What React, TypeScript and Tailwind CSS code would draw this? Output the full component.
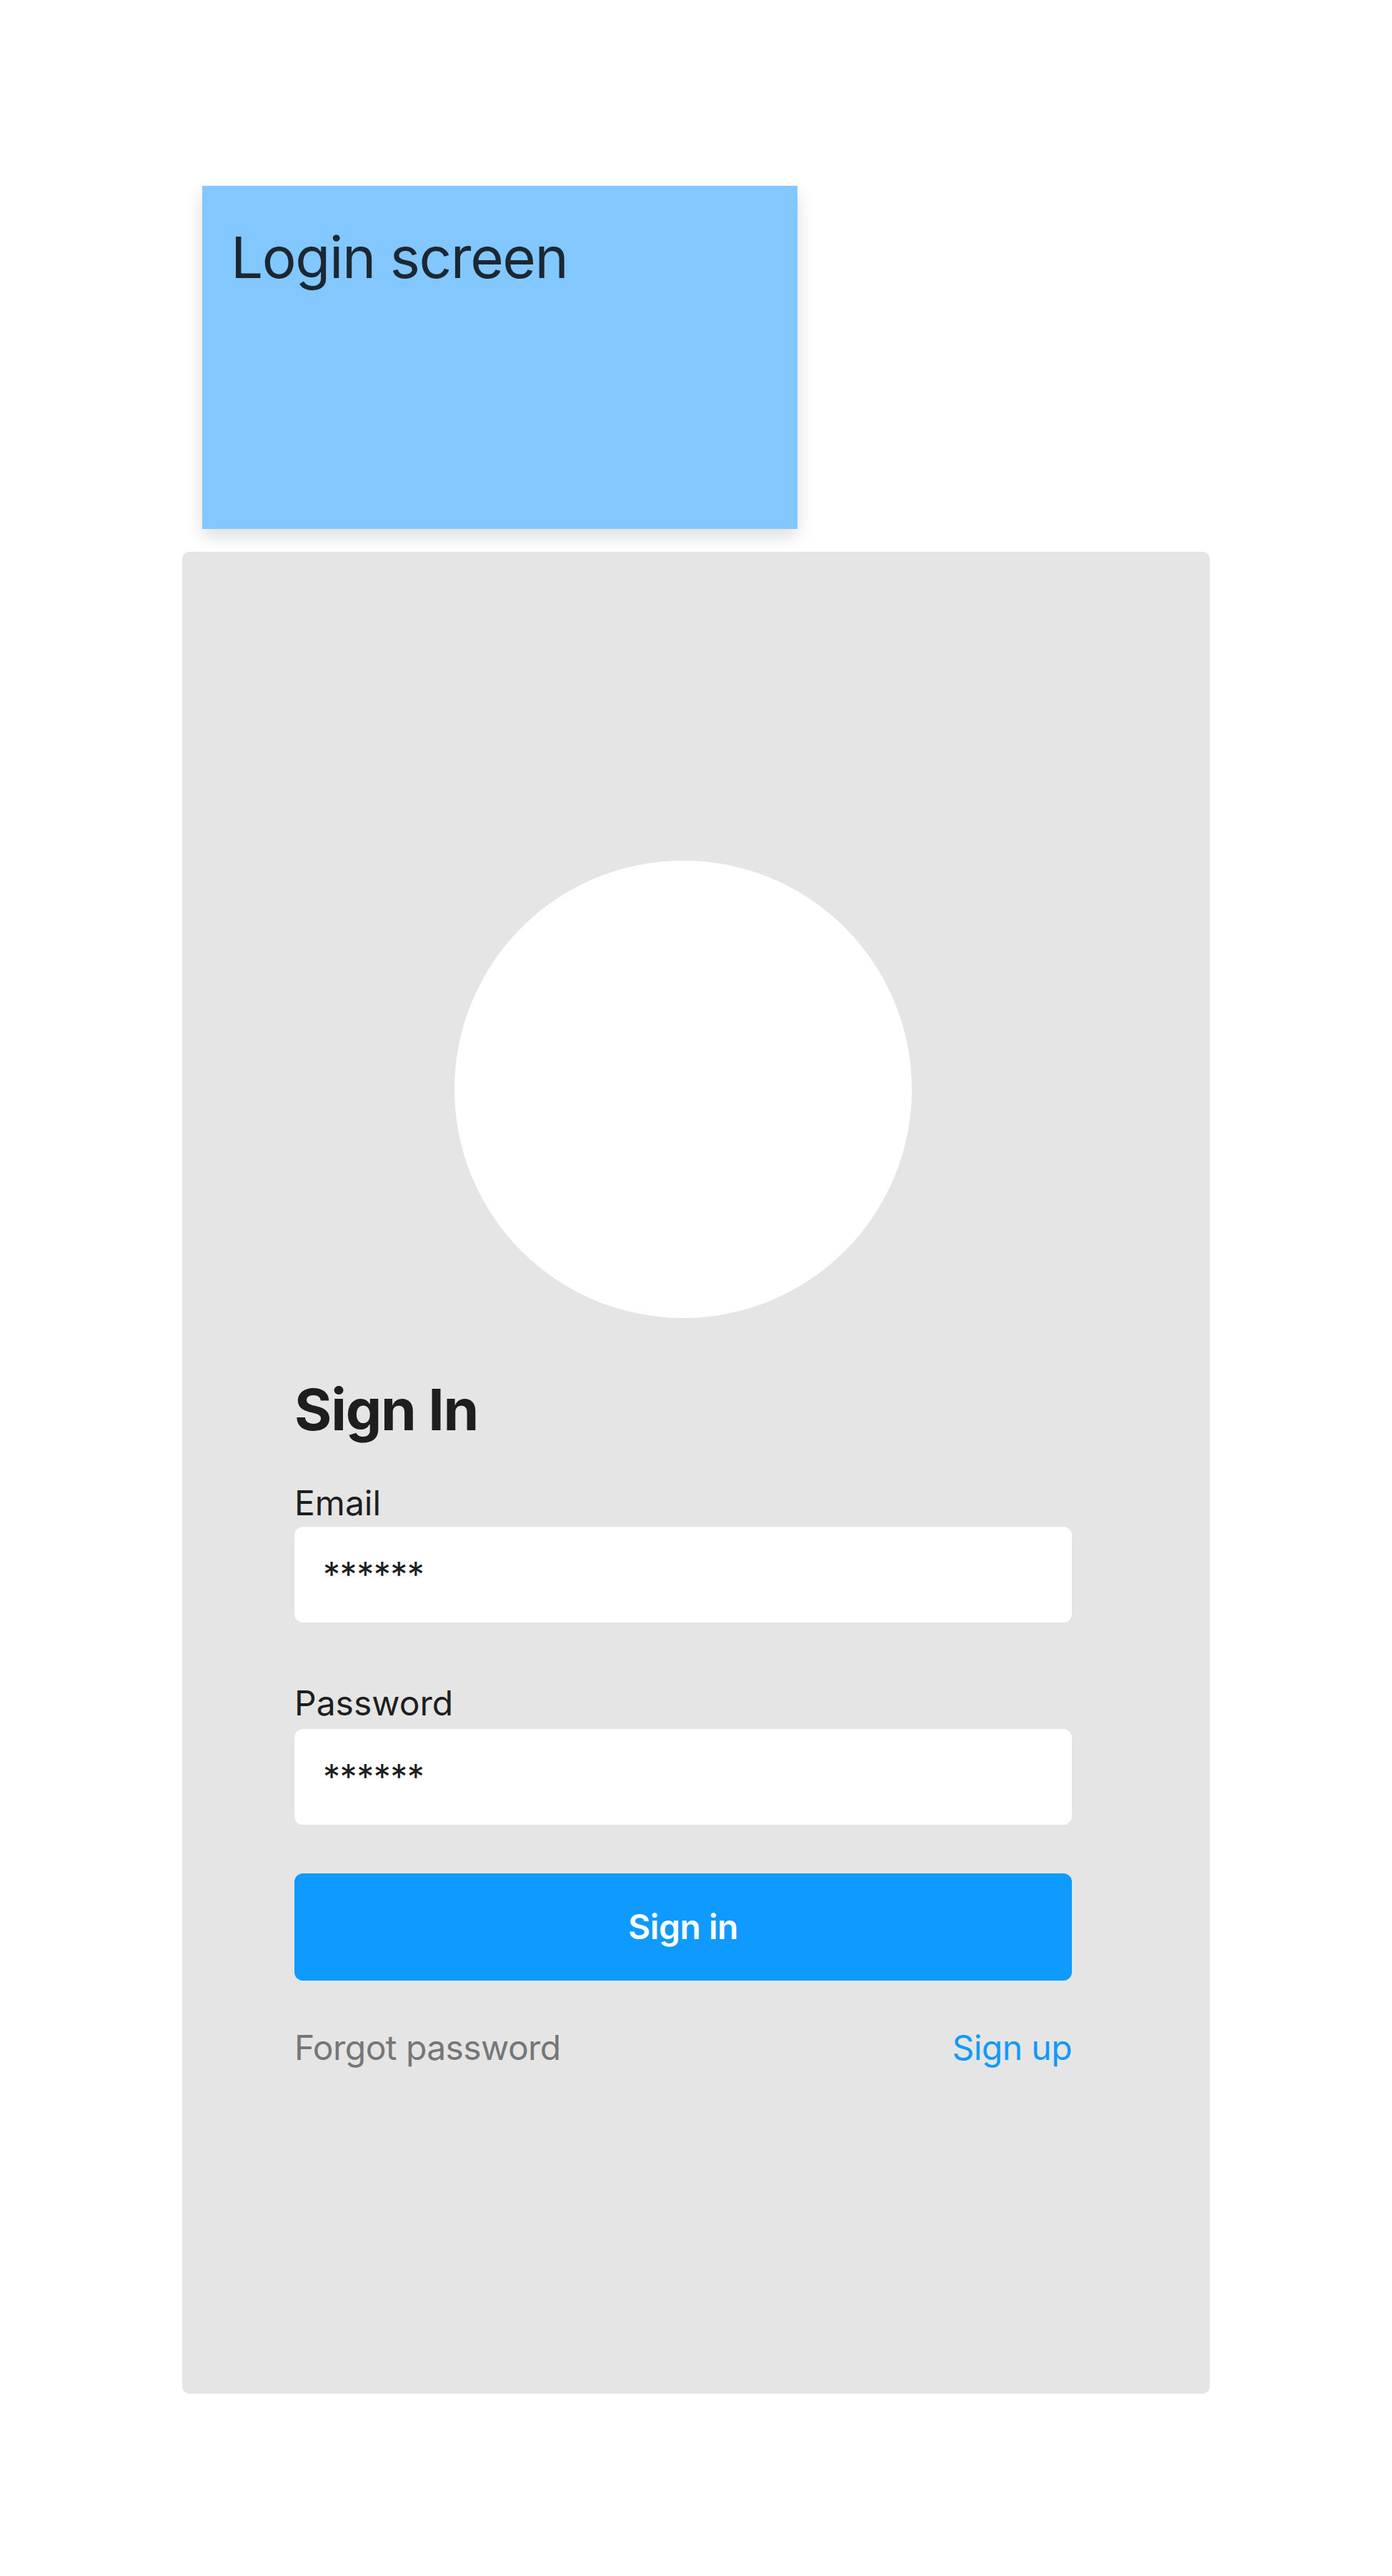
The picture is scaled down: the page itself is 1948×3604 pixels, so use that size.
const inter = "font-['Inter','Noto_Sans',sans-serif]";

function Field({ label, labelGap }: { label: string; labelGap: string }) {
  return (
    <div className="flex flex-col">
      <label className={`text-[48px] leading-none text-[#1e1e1e] ${labelGap}`}>{label}</label>
      <div className="flex h-[134px] items-center rounded-[12px] bg-white pl-[40px]">
        <span className="text-[48px] leading-none tracking-[-0.01em] text-[#1e1e1e]">******</span>
      </div>
    </div>
  );
}

export default function App() {
  return (
    <div className={`min-h-screen bg-white pl-[255px] pt-[260px] ${inter}`}>
      {/* sticky note */}
      <div className="ml-[28px] h-[480px] w-[833px] bg-[#82c8fe] pl-[40px] pt-[60px] shadow-[0_10px_22px_rgba(0,0,0,0.14)]">
        <h2 className="text-[80px] font-normal leading-none tracking-[-0.018em] text-[#1b2733]">Login screen</h2>
      </div>

      {/* login frame */}
      <div className="mt-[32px] flex h-[2577px] w-[1438px] flex-col rounded-[10px] bg-[#e5e5e5] pl-[157px] pt-[432px]">
        <div className="flex w-[1088px] flex-col">
          <div className="mx-auto h-[640px] w-[640px] rounded-full bg-white" />

          <h1 className="mt-[88px] text-[80px] font-bold leading-none tracking-[-0.015em] text-[#1e1e1e]">Sign In</h1>

          <div className="mt-[67px]">
            <Field label="Email" labelGap="mb-[9px]" />
          </div>

          <div className="mt-[89px]">
            <Field label="Password" labelGap="mb-[12px]" />
          </div>

          <button
            type="button"
            className="mt-[68px] h-[150px] w-full rounded-[12px] bg-[#0f9aff] text-[48px] font-semibold leading-none tracking-[-0.01em] text-white"
          >
            Sign in
          </button>

          <div className="mt-[70px] flex items-center justify-between text-[48px] leading-none tracking-[-0.012em]">
            <a className="text-[#767676]">Forgot password</a>
            <a className="text-[#0f9aff]">Sign up</a>
          </div>
        </div>
      </div>
    </div>
  );
}
